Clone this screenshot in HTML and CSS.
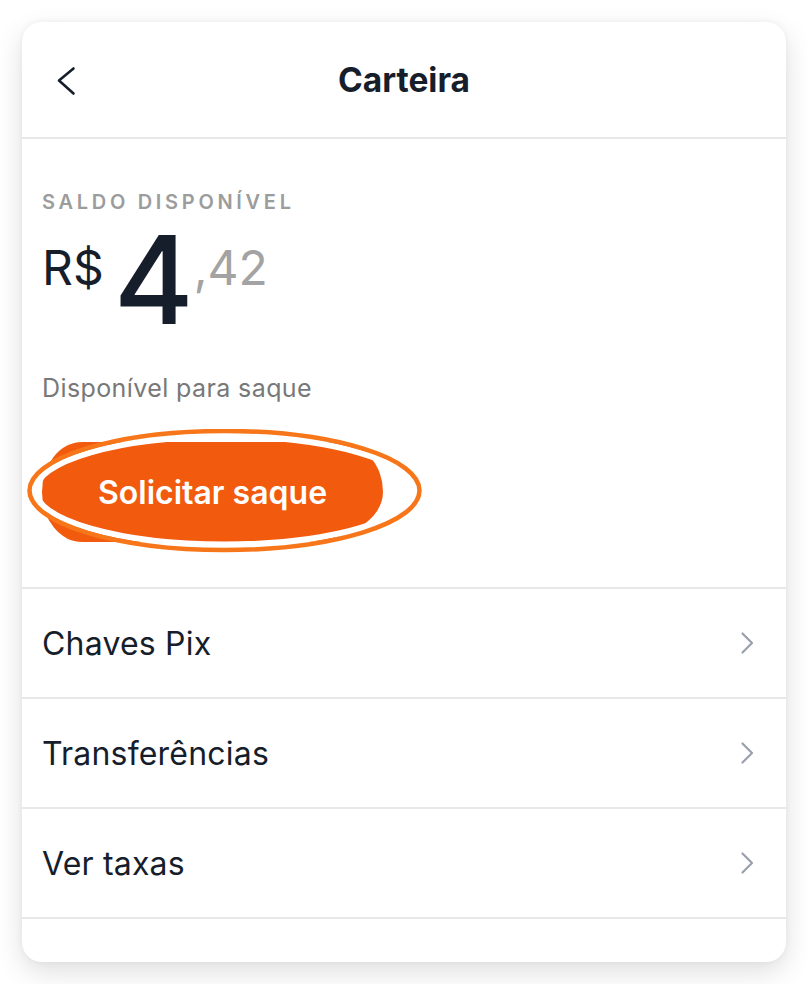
FILE: index.html
```html
<!DOCTYPE html>
<html lang="pt-BR">
<head>
<meta charset="utf-8">
<title>Carteira</title>
<link rel="stylesheet" href="styles.css">
</head>
<body>
<div class="card">
  <header class="header">
    <div class="back">
      <svg width="24" height="32" viewBox="0 0 24 32"><path d="M20.5 4.5 L6 16.5 L20.5 29.5" fill="none" stroke="#161d2b" stroke-width="2.6" stroke-linecap="round" stroke-linejoin="round"/></svg>
    </div>
    <h1 class="title">Carteira</h1>
    <div></div>
  </header>
  <section class="balance">
    <div class="label">SALDO DISPONÍVEL</div>
    <div class="amount">
      <span class="cur">R$</span>
      <span class="int">4</span>
      <span class="dec">,42</span>
    </div>
    <div class="sub">Disponível para saque</div>
    <div class="btn-wrap">
      <button class="btn">Solicitar saque</button>
      <svg class="mark" width="420" height="140" viewBox="0 0 420 140">
        <ellipse cx="202.5" cy="61.5" rx="189" ry="54" fill="none" stroke="#ffffff" stroke-width="6"/>
        <ellipse cx="202.5" cy="61.5" rx="195" ry="59.5" fill="none" stroke="#f7761a" stroke-width="4.5"/>
      </svg>
    </div>
  </section>
  <nav class="list">
    <div class="row"><span>Chaves Pix</span><svg width="16" height="24" viewBox="0 0 16 24"><path d="M3.5 2.5 L13 12 L3.5 21.5" fill="none" stroke="#9aa0ab" stroke-width="2.2" stroke-linecap="round" stroke-linejoin="round"/></svg></div>
    <div class="row"><span>Transferências</span><svg width="16" height="24" viewBox="0 0 16 24"><path d="M3.5 2.5 L13 12 L3.5 21.5" fill="none" stroke="#9aa0ab" stroke-width="2.2" stroke-linecap="round" stroke-linejoin="round"/></svg></div>
    <div class="row"><span>Ver taxas</span><svg width="16" height="24" viewBox="0 0 16 24"><path d="M3.5 2.5 L13 12 L3.5 21.5" fill="none" stroke="#9aa0ab" stroke-width="2.2" stroke-linecap="round" stroke-linejoin="round"/></svg></div>
  </nav>
</div>
</body>
</html>
```

FILE: styles.css
```css
* { box-sizing: border-box; }
html, body { margin: 0; padding: 0; background: #ffffff; }
body {
  font-family: Inter, "Noto Sans", "Liberation Sans", sans-serif;
  color: #161d2b;
  padding: 22px;
}
.card {
  width: 764px;
  height: 940px;
  background: #ffffff;
  border-radius: 20px;
  box-shadow: 0 10px 28px rgba(0,0,0,0.13), 0 0 6px rgba(0,0,0,0.05);
  overflow: hidden;
}
.header {
  height: 117px;
  border-bottom: 2px solid #e8e8e8;
  display: grid;
  grid-template-columns: 1fr auto 1fr;
  align-items: center;
}
.back { padding-left: 31px; display: flex; align-items: center; }
.back svg { display: block; }
.title {
  margin: 0;
  font-size: 33.5px;
  font-weight: 700;
  line-height: 40px;
  color: #161d2b;
}
.balance {
  padding: 51px 20px 45px 20px;
  border-bottom: 2px solid #e8e8e8;
}
.label {
  font-size: 20px;
  line-height: 24px;
  font-weight: 600;
  letter-spacing: 3.7px;
  color: #9c9c9c;
}
.amount {
  display: flex;
  align-items: flex-start;
  margin-top: 7px;
  height: 120px;
}
.cur {
  font-size: 48px;
  line-height: 1;
  font-weight: 400;
  margin-top: 23px;
  color: #161d2b;
}
.int {
  font-size: 122px;
  line-height: 1;
  font-weight: 500;
  margin-top: -2px;
  margin-left: 10px;
  color: #161d2b;
}
.dec {
  font-size: 48px;
  line-height: 1;
  font-weight: 400;
  margin-top: 23px;
  margin-left: 0;
  color: #a3a3a3;
}
.sub {
  margin-top: 32px;
  font-size: 25px;
  line-height: 30px;
  letter-spacing: 0.4px;
  color: #787878;
}
.btn-wrap {
  position: relative;
  margin-top: 39px;
  width: 341px;
  height: 100px;
}
.btn {
  display: block;
  width: 341px;
  height: 100px;
  border: 0;
  border-radius: 40px 44px 80px 40px / 50px 50px 50px 50px;
  background: #f25a0e;
  color: #ffffff;
  font-family: Inter, "Noto Sans", "Liberation Sans", sans-serif;
  font-size: 32px;
  font-weight: 600;
  padding: 0;
}
.mark {
  position: absolute;
  left: -20px;
  top: -13px;
  pointer-events: none;
}
.row {
  height: 110px;
  border-bottom: 2px solid #e8e8e8;
  display: flex;
  align-items: center;
  justify-content: space-between;
  padding: 0 31px 0 20px;
  font-size: 32px;
  letter-spacing: 0.2px;
  color: #161d2b;
}
.row svg { display: block; }
```
